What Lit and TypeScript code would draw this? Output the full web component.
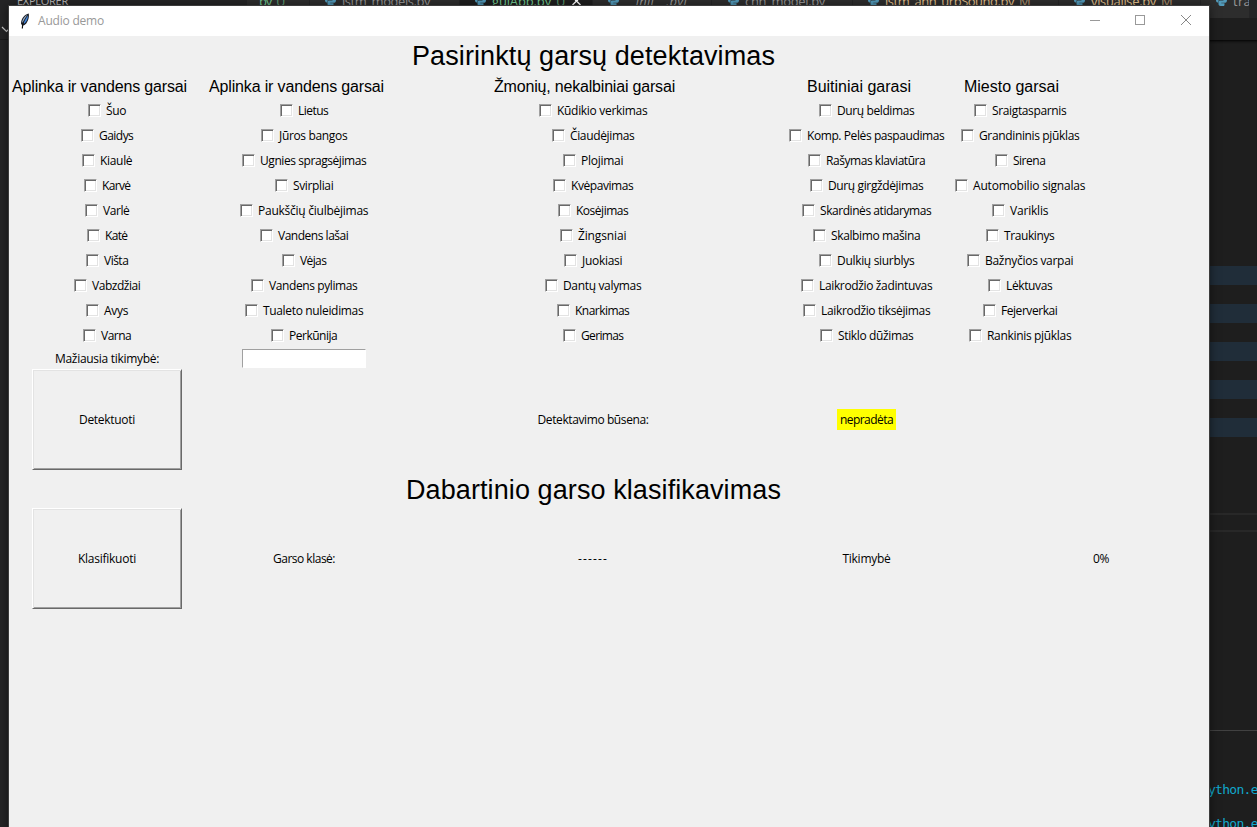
import { LitElement, html, css, svg } from "lit";
import { customElement, property } from "lit/decorators.js";

/** Single line of text whose tracking is adjusted to fill a given width. */
@customElement("fit-text")
class FitText extends LitElement {
  @property({ type: Number }) width = 0;
  @property() text = "";
  static styles = css`
    :host { display: inline-block; white-space: pre; }
    .t { display: inline-block; }
  `;
  render() {
    return html`<span class="t">${this.text}</span>`;
  }
  updated() {
    const el = this.renderRoot.querySelector(".t") as HTMLElement;
    el.style.letterSpacing = "0px";
    const natural = el.getBoundingClientRect().width;
    el.style.letterSpacing = (this.width - natural) / this.text.length + "px";
  }
}

type Item = [string, number];
interface Group { title: string; width: number; shift: number; items: Item[]; }

const GROUPS: Group[] = [
  { title: "Aplinka ir vandens garsai", width: 175, shift: 15, items: [
    ["Šuo", 20], ["Gaidys", 34], ["Kiaulė", 32], ["Karvė", 28], ["Varlė", 26],
    ["Katė", 22], ["Višta", 24], ["Vabzdžiai", 48], ["Avys", 24], ["Varna", 30]] },
  { title: "Aplinka ir vandens garsai", width: 175, shift: 15, items: [
    ["Lietus", 30], ["Jūros bangos", 68], ["Ugnies spragsėjimas", 106], ["Svirpliai", 40],
    ["Paukščių čiulbėjimas", 110], ["Vandens lašai", 70], ["Vėjas", 26],
    ["Vandens pylimas", 88], ["Tualeto nuleidimas", 100], ["Perkūnija", 48]] },
  { title: "Žmonių, nekalbiniai garsai", width: 181, shift: 17, items: [
    ["Kūdikio verkimas", 90], ["Čiaudėjimas", 64], ["Plojimai", 42], ["Kvėpavimas", 62],
    ["Kosėjimas", 52], ["Žingsniai", 48], ["Juokiasi", 40], ["Dantų valymas", 78],
    ["Knarkimas", 54], ["Gerimas", 42]] },
  { title: "Buitiniai garasi", width: 104, shift: 15, items: [
    ["Durų beldimas", 77], ["Komp. Pelės paspaudimas", 137], ["Rašymas klaviatūra", 99],
    ["Durų girgždėjimas", 95], ["Skardinės atidarymas", 111], ["Skalbimo mašina", 89],
    ["Dulkių siurblys", 77], ["Laikrodžio žadintuvas", 113], ["Laikrodžio tiksėjimas", 109],
    ["Stiklo dūžimas", 75]] },
  { title: "Miesto garsai", width: 95, shift: 17, items: [
    ["Sraigtasparnis", 74], ["Grandininis pjūklas", 100], ["Sirena", 32],
    ["Automobilio signalas", 112], ["Variklis", 38], ["Traukinys", 50],
    ["Bažnyčios varpai", 88], ["Lėktuvas", 46], ["Fejerverkai", 56], ["Rankinis pjūklas", 84]] },
];

const python = svg`<svg class="py" width="11" height="12" viewBox="0 0 11 12">
  <path fill="#519aba" d="M3 0h3.5c1.2 0 2 .7 2 1.9v2c0 1.1-.7 1.7-1.9 1.7H4.2C3 5.600 2.400 6.300 2.400 7.400v1.100H1.600C.5 8.500 0 7.400 0 5.900S.6 3.200 1.700 3.200h4V2.700H2.500V1z"/>
  <path fill="#519aba" d="M8 12H4.500c-1.200 0-2-.7-2-1.900v-2c0-1.100.7-1.700 1.900-1.700h2.400C8 6.400 8.600 5.700 8.600 4.600V3.500h.8C10.500 3.500 11 4.600 11 6.100S10.400 8.800 9.300 8.800h-4v.5h3.200V11z"/>
</svg>`;

const TABS = [
  { name: "py", w: 63, lead: 12, tw: 12, cls: "git", mark: "U", icon: false },
  { name: "lstm_models.py", w: 150, lead: 15, tw: 88, cls: "", mark: "", icon: true },
  { name: "guiApp.py", w: 133, lead: 15, tw: 59, cls: "git active", mark: "U", icon: true },
  { name: "__init__.pyi", w: 119, lead: 15, tw: 62, cls: "italic", mark: "", icon: true },
  { name: "cnn_model.py", w: 141, lead: 16, tw: 80, cls: "", mark: "", icon: true },
  { name: "lstm_ann_urbSound.py", w: 206, lead: 15, tw: 129, cls: "mod", mark: "M", icon: true },
  { name: "visualise.py", w: 142, lead: 15, tw: 65, cls: "mod", mark: "M", icon: true },
  { name: "tra", w: 49, lead: 15, tw: 18, cls: "", mark: "", icon: true },
];

@customElement("app-root")
class AppRoot extends LitElement {
  static styles = css`
    :host { display: block; width: 1257px; height: 827px; overflow: hidden; position: relative;
      background: #1e1e1e; color: #000; font-family: "Open Sans", "Noto Sans", sans-serif; font-size: 12px; }
    * { box-sizing: border-box; }
    .editor { display: grid; grid-template-columns: 247px 1fr; height: 827px; overflow: hidden; }
    .explorer { background: #252526; color: #bbb; font-size: 11px; line-height: 14px; }
    .exhead { display: flex; justify-content: space-between; padding: 0 5px 0 17px; margin-top: -6px; height: 46px;
      border-bottom: 1px solid #1b1b1c; }
    .dots { color: #c5c5c5; font-weight: 700; font-size: 15px; line-height: 6px; }
    .chev { display: block; margin: -15px 0 0 1px; }
    .code { min-width: 0; }
    .tabs { display: flex; height: 18px; background: #252526; overflow: hidden; }
    .tab { display: flex; flex: none; height: 18px; background: #2d2d2d; color: #969696; font-size: 13px;
      line-height: 18px; border-right: 1px solid #252526; overflow: hidden; }
    .tab fit-text { margin-top: -8px; }
    .py { margin: -6px 6px 0 0; flex: none; }
    .active { background: #1e1e1e; }
    .git { color: #73c991; }
    .mod { color: #e2c08d; }
    .italic { font-style: italic; }
    .mark { margin: -8px 0 0 5px; opacity: .7; }
    .close { margin: -5px 0 0 6px; }
    .side { display: flex; flex-direction: column; margin-left: 961px; padding-top: 22px; }
    .crumb { height: 226px; box-shadow: inset 0 3px 3px -2px #000; }
    .band { height: 19px; background: #202d39; margin-bottom: 19px; }
    .rule { height: 2px; background: #282828; }
    .gap1 { margin-top: 57px; }
    .gap2 { margin-top: 15px; }
    .panel { margin-top: 198px; height: 1px; background: #414141; }
    .term { color: #11a8cd; font: 13px/34px "DejaVu Sans Mono", monospace; margin-top: 42px; white-space: pre; }
    .term fit-text { display: block; }

    .window { position: absolute; left: 8px; top: 5px; width: 1202px; height: 830px; border: 1px solid #3c3c3c;
      background: #f0f0f0; box-shadow: 0 1px 9px rgba(0,0,0,.5); }
    .bar { height: 30px; background: #fff; display: flex; align-items: center; color: #999; padding-left: 10px; }
    .bar fit-text { margin: -1px 0 0 7px; flex: 1; }
    .ctl { width: 46px; height: 30px; display: block; }
    .form { display: grid; grid-template-columns: 196px 198px 380px 167px 140px 22px; }
    .title { grid-column: 1 / -1; display: grid; grid-template-columns: subgrid; height: 38px; }
    .title fit-text { grid-column: 3; justify-self: center; padding-left: 1px;
      font: 27px/40px "Liberation Sans", Arial, sans-serif; }
    .group { display: flex; flex-direction: column; align-items: center; }
    .head { font: 16px/26px "Liberation Sans", Arial, sans-serif; height: 24px; }
    .check { display: flex; height: 25px; align-items: center; gap: 5px; }
    .box { width: 13px; height: 13px; background: #fff; border: 1px solid; border-color: #a0a0a0 #fff #fff #a0a0a0;
      box-shadow: inset 1px 1px #696969, inset -1px -1px #e3e3e3; }
    .name { white-space: nowrap; line-height: 16px; }
    .cell { display: flex; align-items: center; justify-content: center; white-space: nowrap; }
    .row { display: grid; grid-column: 1 / -1; grid-template-columns: subgrid; }
    .prob { height: 21px; }
    .act { height: 101px; }
    .entry { width: 124px; height: 19px; background: #fff; border: 1px solid; border-color: #a0a0a0 #fff #fff #a0a0a0; }
    .btn { width: 150px; height: 101px; padding: 0; background: #f0f0f0; color: #000; font: inherit; border: 1px solid;
      border-color: #fff #696969 #696969 #fff; box-shadow: inset 1px 1px #e3e3e3, inset -1px -1px #a0a0a0; border-radius: 0; }
    .state { background: #ff0; padding: 0 3px; height: 21px; line-height: 21px; }
  `;

  private group(g: Group) {
    return html`<div class="group">
      <div class="head" style="padding-right:${g.shift}px"><fit-text .text=${g.title} .width=${g.width}></fit-text></div>
      ${g.items.map(([n, w]) => html`<div class="check"><span class="box"></span>
        <span class="name" style="width:${w}px"><fit-text .text=${n} .width=${w + 0.3}></fit-text></span></div>`)}
    </div>`;
  }
  private cell(t: string, w: number) {
    return html`<div class="cell"><fit-text .text=${t} .width=${w}></fit-text></div>`;
  }
  private tab(t: (typeof TABS)[number]) {
    return html`<div class="tab ${t.cls}" style="width:${t.w}px;padding-left:${t.lead}px">
      ${t.icon ? python : ""}<fit-text .text=${t.name} .width=${t.tw}></fit-text>
      ${t.mark ? html`<span class="mark">${t.mark}</span>` : ""}
      ${t.cls.includes("active") ? html`<svg class="close" width="11" height="12" viewBox="0 0 11 12"><path d="M1.500 2l8 8M9.500 2l-8 8" stroke="#fff" stroke-width="1.4"/></svg>` : ""}
    </div>`;
  }

  render() {
    return html`
      <div class="editor">
        <div class="explorer">
          <div class="exhead"><fit-text .text=${"EXPLORER"} .width=${51}></fit-text><span class="dots">···</span></div>
          <svg class="chev" width="12" height="9" viewBox="0 0 12 9"><path d="M1 2l4.500 4.500L10 2" fill="none" stroke="#c5c5c5" stroke-width="1.200"/></svg>
        </div>
        <div class="code">
          <div class="tabs">${TABS.map((t) => this.tab(t))}</div>
          <div class="side">
            <div class="crumb"></div>
            ${[0, 1, 2, 3, 4].map(() => html`<div class="band"></div>`)}
            <div class="rule gap1"></div><div class="rule gap2"></div>
            <div class="panel"></div>
            <div class="term"><fit-text .text=${"ython.exe"} .width=${64}></fit-text><fit-text .text=${"ython.exe"} .width=${64}></fit-text></div>
          </div>
        </div>
      </div>
      <div class="window">
        <div class="bar">
          <svg width="12" height="16" viewBox="0 0 12 16">
            <path d="M9.800 .5C5.500 1.500 2 5.500 2 10.500l1.200 2.200 1.800-.4C8.300 10.500 10.500 5.500 9.800 .5z" fill="#1c2029"/>
            <path d="M8.300 1.900C5.500 3.200 3.200 6.500 3 10.200 4.500 8 6.300 4.500 8.300 1.900z" fill="#9fb4cc"/>
            <path d="M9 2.500C7 5.200 5.200 8.500 4.300 11.300 7 9.500 9 6.500 9 2.500z" fill="#3f87de"/>
            <path d="M4.300 9.500C3.700 11.500 3.400 13.500 3.300 15.500" fill="none" stroke="#111" stroke-width="1.200"/>
          </svg>
          <fit-text .text=${"Audio demo"} .width=${66}></fit-text>
          <svg class="ctl" viewBox="0 0 46 30"><path d="M19 14.500h10" stroke="#999"/></svg>
          <svg class="ctl" viewBox="0 0 46 30"><rect x="18.500" y="9.500" width="9" height="9" fill="none" stroke="#999"/></svg>
          <svg class="ctl" viewBox="0 0 46 30"><path d="M18 9l10 10M28 9l-10 10" stroke="#888"/></svg>
        </div>
        <div class="form">
          <div class="title"><fit-text .text=${"Pasirinktų garsų detektavimas"} .width=${363}></fit-text></div>
          ${GROUPS.map((g) => this.group(g))}<div></div>
          <div class="row prob">${this.cell("Mažiausia tikimybė:", 104)}<div class="cell"><div class="entry"></div></div></div>
          <div class="row act">
            <div class="cell"><button class="btn"><fit-text .text=${"Detektuoti"} .width=${56}></fit-text></button></div>
            <div></div>${this.cell("Detektavimo būsena:", 111)}
            <div class="cell"><div class="state"><fit-text .text=${"nepradėta"} .width=${53}></fit-text></div></div>
          </div>
          <div class="title"><fit-text .text=${"Dabartinio garso klasifikavimas"} .width=${375}></fit-text></div>
          <div class="row act">
            <div class="cell"><button class="btn"><fit-text .text=${"Klasifikuoti"} .width=${58}></fit-text></button></div>
            ${this.cell("Garso klasė:", 62)}${this.cell("------", 30)}${this.cell("Tikimybė", 48)}
            <div></div>${this.cell("0%", 16)}
          </div>
        </div>
      </div>`;
  }
}
